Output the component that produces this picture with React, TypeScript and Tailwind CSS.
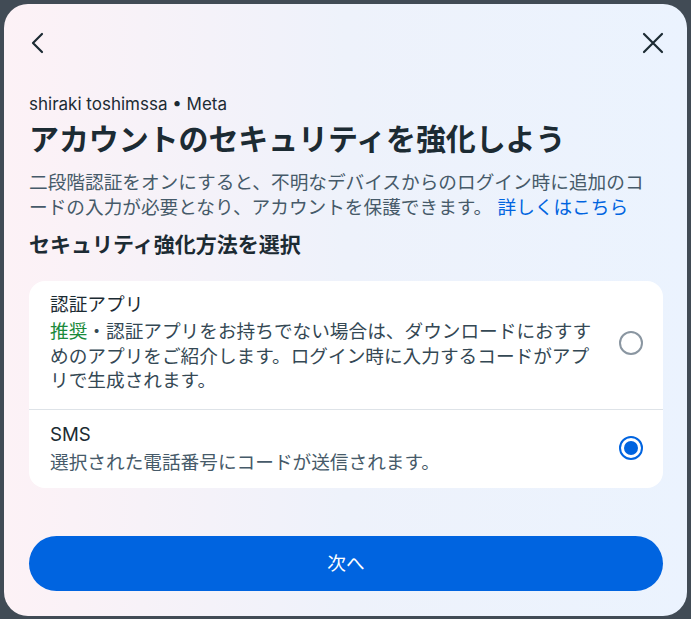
import React from "react";

const FONT = '"Inter", "Noto Sans CJK JP", sans-serif';

function Radio({ checked }: { checked: boolean }) {
  if (checked) {
    return (
      <div className="flex h-6 w-6 shrink-0 items-center justify-center rounded-full border-2 border-[#0064e0]">
        <div className="h-[14px] w-[14px] rounded-full bg-[#0064e0]" />
      </div>
    );
  }
  return <div className="h-6 w-6 shrink-0 rounded-full border-2 border-[#8a96a1]" />;
}

export default function App() {
  return (
    <div className="min-h-screen w-full bg-[#414b55] p-1" style={{ fontFamily: FONT }}>
      <div className="flex h-[612px] w-[683px] flex-col rounded-[24px] bg-gradient-to-r from-[#fdf2f6] via-[#eef2fb] to-[#ebf3fe] pl-[25px] pr-[24px] pb-[25px] text-[#1c2b33]">
        <div className="mt-[19px] flex h-10 items-center justify-between">
          <svg width="24" height="24" viewBox="0 0 24 24" className="-ml-[2px]">
            <path d="M15 3 L6 12 L15 21" fill="none" stroke="#1c2b33" strokeWidth="2.2" strokeLinecap="round" strokeLinejoin="round" />
          </svg>
          <svg width="24" height="24" viewBox="0 0 24 24" className="-mr-[2px]">
            <path d="M3 3 L21 21 M21 3 L3 21" fill="none" stroke="#1c2b33" strokeWidth="2.2" strokeLinecap="round" />
          </svg>
        </div>

        <div className="mt-[30px] text-[17px] leading-[22px]">shiraki toshimssa • Meta</div>
        <h1 className="mt-[4px] text-[30px] font-bold leading-[40px] tracking-[-0.1px]">
          アカウントのセキュリティを強化しよう
        </h1>
        <p className="mt-[11px] pr-[10px] text-[18.67px] leading-[25px] text-[#465a69]">
          二段階認証をオンにすると、不明なデバイスからのログイン時に追加のコードの入力が必要となり、アカウントを保護できます。{" "}
          <span className="text-[#0064e0]">詳しくはこちら</span>
        </p>
        <h2 className="mt-[10px] text-[21px] font-bold leading-[30px]">セキュリティ強化方法を選択</h2>

        <div className="mt-[21px] flex flex-col rounded-[16px] bg-white">
          <div className="flex items-center gap-[20px] pl-[21px] pr-[20px] pt-[11px] pb-[15px]">
            <div className="flex-1">
              <div className="text-[18.67px] leading-[25px]">認証アプリ</div>
              <div className="mt-[3px] text-[18.67px] leading-[24.5px] text-[#344854]">
                <span className="text-[#1a8a3a]">推奨</span>・認証アプリをお持ちでない場合は、ダウンロードにおすすめのアプリをご紹介します。ログイン時に入力するコードがアプリで生成されます。
              </div>
            </div>
            <Radio checked={false} />
          </div>
          <div className="h-px bg-[#dee3e8]" />
          <div className="flex items-center gap-[20px] pl-[21px] pr-[20px] pt-[12px] pb-[13px]">
            <div className="flex-1">
              <div className="text-[18.67px] leading-[25px]">SMS</div>
              <div className="mt-[3px] text-[18.67px] leading-[25px] text-[#465a69]">
                選択された電話番号にコードが送信されます。
              </div>
            </div>
            <Radio checked={true} />
          </div>
        </div>

        <button className="mt-auto flex h-[55px] w-full items-center justify-center rounded-full bg-[#0064e0] text-[18.67px] text-white">
          次へ
        </button>
      </div>
    </div>
  );
}
